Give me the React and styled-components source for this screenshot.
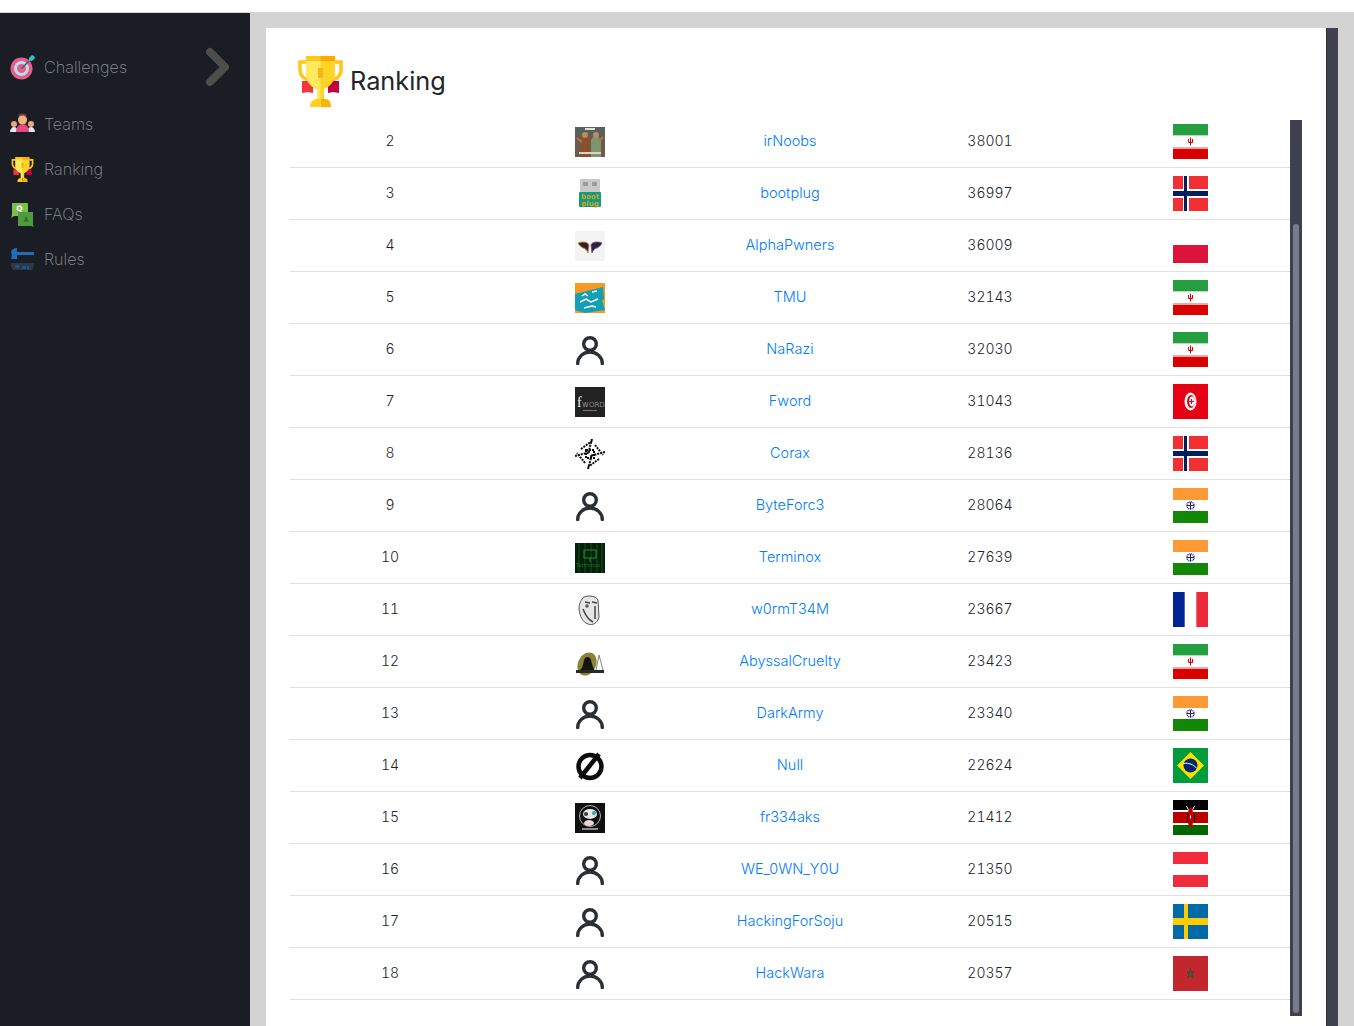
import React from "react";
import styled, { createGlobalStyle } from "styled-components";

const GlobalStyle = createGlobalStyle`
  html, body {
    margin: 0;
    height: 100%;
    overflow: hidden;
    background: #fff;
    font-family: Inter, "DejaVu Sans", sans-serif;
  }
`;

const Page = styled.div`
  padding-top: 12px;
  height: 1026px;
  box-sizing: border-box;
`;

const Shell = styled.div`
  display: flex;
  height: 1014px;
  background: #d3d3d3;
`;

const Sidebar = styled.nav`
  width: 250px;
  flex: none;
  box-sizing: border-box;
  margin-top: 1px;
  padding-top: 32px;
  background: #1a1d24;
`;

const NavItem = styled.a`
  display: flex;
  align-items: center;
  gap: 9px;
  height: 45px;
  padding: 0 20px 0 10px;
  margin-bottom: ${(p) => (p.$first ? "12px" : "0")};
  font-weight: 200;
  font-size: 16.200px;
  color: #8c8f94;
`;

const NavLabel = styled.span`
  padding-bottom: 2px;
`;

const NavIcon = styled.svg`
  width: 25px;
  height: 25px;
  flex: none;
`;

const Chevron = styled.svg`
  width: 24px;
  height: 40px;
  margin-left: auto;
  margin-top: -2px;
  transform: translateX(-1px);
`;

const Main = styled.main`
  flex: 1;
  display: flex;
  padding: 16px 16px 0;
  min-width: 0;
`;

const Card = styled.section`
  flex: 1;
  box-sizing: border-box;
  padding: 28px 24px 0;
  background: #fff;
  overflow: hidden;
`;

const OuterBar = styled.div`
  width: 12px;
  flex: none;
  background: #3f424e;
  border-left: 1px solid #2f313b;
  box-sizing: border-box;
`;

const Heading = styled.h1`
  display: flex;
  align-items: center;
  gap: 7px;
  height: 51px;
  margin: 0 0 9px;
  padding-left: 8px;
  font-weight: 400;
  font-size: 25.300px;
  color: #212529;
`;

const HeadingText = styled.span`
  padding-bottom: 2px;
`;

const TitleCup = styled.svg`
  width: 45px;
  height: 51px;
  flex: none;
`;

const TableArea = styled.div`
  display: flex;
`;

const Rows = styled.div`
  width: 1000px;
  flex: none;
`;

const Row = styled.div`
  display: grid;
  grid-template-columns: repeat(5, 200px);
  align-items: center;
  height: 52px;
  box-sizing: border-box;
  border-bottom: 1px solid #dee2e6;
  font-size: 14.500px;
  font-weight: 300;
  color: #212529;
  text-align: center;
`;

const Cell = styled.div`
  display: flex;
  justify-content: center;
  align-items: center;
`;

const NumberCell = styled(Cell)`
  padding-bottom: 2px;
  font-size: 14px;
  font-variant-numeric: tabular-nums;
`;

const NameCell = styled(Cell)`
  padding-bottom: 2px;
`;

const TeamLink = styled.a`
  color: #007bff;
  text-decoration: none;
`;

const Avatar = styled.svg`
  display: block;
  width: 30px;
  height: 30px;
`;

const Flag = styled.svg`
  display: block;
  width: 35px;
  height: 35px;
`;

const ScrollTrack = styled.div`
  width: 12px;
  flex: none;
  box-sizing: border-box;
  height: 896px;
  margin-top: 4px;
  padding: 104px 3px 3px;
  background: #3f424e;
`;

const ScrollThumb = styled.div`
  height: 100%;
  border-radius: 3px;
  background: #7a7d88;
`;

const Person = () => (
  <Avatar viewBox="0 0 30 30" fill="none" stroke="#2c2e35" strokeWidth="3.400" strokeLinecap="round">
    <circle cx="15" cy="9" r="6.300" />
    <path d="M2.700 28.500a12.300 11.500 0 0 1 24.600 0" />
  </Avatar>
);

const avatars = {
  irnoobs: (
    <Avatar viewBox="0 0 30 30">
      <rect width="30" height="30" fill="#6d5a4a" />
      <rect width="30" height="8" fill="#59615c" />
      <path d="M5 30V10l4-4h4l2 5v19z" fill="#8a4f2c" />
      <circle cx="10" cy="8" r="3" fill="#b98a68" />
      <path d="M16 30V13l3-4h4l3 5v16z" fill="#7f936c" />
      <circle cx="21" cy="8" r="3" fill="#b58c74" />
      <path d="M2 11l5 4M28 10l-4 4" stroke="#a57a5c" strokeWidth="2" />
      <rect x="4" y="25" width="22" height="2" fill="#d8d2cc" />
      <rect x="10" y="1" width="10" height="2" fill="#e2deda" />
    </Avatar>
  ),
  bootplug: (
    <Avatar viewBox="0 0 30 30">
      <rect x="5" y="0" width="20" height="14" fill="#c9c9c9" />
      <rect x="8" y="3" width="5" height="4" fill="#9a9a9a" />
      <rect x="17" y="3" width="5" height="4" fill="#9a9a9a" />
      <rect x="4" y="13" width="22" height="15" rx="1" fill="#109b82" />
      <text x="15" y="19.500" textAnchor="middle" fontSize="7" fontWeight="700" fontFamily="DejaVu Sans" fill="#d9a414">boot</text>
      <text x="15" y="26.500" textAnchor="middle" fontSize="7" fontWeight="700" fontFamily="DejaVu Sans" fill="#d9a414">plug</text>
    </Avatar>
  ),
  alpha: (
    <Avatar viewBox="0 0 30 30">
      <rect width="30" height="30" fill="#f3f3f3" />
      <path d="M3 12c5-2 10-1 11 2l-1 8c-1-3-3-5-5-5-2-1-4-3-5-5z" fill="#2b2430" stroke="#e08a1e" strokeWidth=".8" />
      <path d="M27 12c-5-2-10-1-11 2l1 8c1-3 3-5 5-5 2-1 4-3 5-5z" fill="#2b2430" stroke="#6a3fb0" strokeWidth=".8" />
    </Avatar>
  ),
  tmu: (
    <Avatar viewBox="0 0 30 30">
      <rect width="30" height="30" fill="#f59a23" />
      <path d="M0 11l28-7 1 12-2 2 3 9-20 3-10-3z" fill="#14a0b4" />
      <path d="M7 13l3-2 3 2M17 9l5-1M5 19l6-3 5 3 7-3M9 25l8-2 4 1" stroke="#fff" strokeWidth="1.500" fill="none" />
    </Avatar>
  ),
  fword: (
    <Avatar viewBox="0 0 30 30">
      <rect width="30" height="30" fill="#222" />
      <text x="2" y="20" fontSize="14" fontFamily="Liberation Serif" fill="#eee">f</text>
      <text x="7" y="20" fontSize="7" fontFamily="DejaVu Sans" fill="#ddd">WORD</text>
      <rect x="8" y="23" width="14" height="1" fill="#777" />
    </Avatar>
  ),
  corax: (
    <Avatar viewBox="0 0 30 30" fill="none" stroke="#0a0a0a" strokeWidth="2" strokeDasharray="2 1">
      <rect x="11" y="11" width="8" height="8" />
      <path d="M0 17L15 13M30 13L15 17M17 0L13 15M13 30L17 15" />
      <path d="M6 10L17 2M24 20L13 28M20 6L28 16M10 24L2 14" />
    </Avatar>
  ),
  terminox: (
    <Avatar viewBox="0 0 30 30">
      <rect width="30" height="30" fill="#052009" />
      <path d="M4 0v30M10 0v30M16 0v30M22 0v30M27 0v30" stroke="#0c4019" strokeWidth="1.500" />
      <rect x="9" y="7" width="12" height="8" fill="none" stroke="#2a8a38" />
      <path d="M15 15v4" stroke="#2a8a38" />
      <text x="1" y="24" fontSize="5.400" fontFamily="DejaVu Sans" fill="#28b13a">Terminox</text>
    </Avatar>
  ),
  worm: (
    <Avatar viewBox="0 0 30 30">
      <path d="M9 2c5-2 12-1 14 3l1 17c-1 6-7 9-11 7-6-2-8-8-9-15 0-5 2-10 5-12z" fill="#e6e6e6" stroke="#555" />
      <path d="M10 7l5 1M17 7l5 1M8 14c3 8 6 11 10 13M20 11v13" stroke="#444" strokeWidth="1.500" fill="none" />
      <circle cx="12" cy="11" r="1.700" fill="#555" />
    </Avatar>
  ),
  abyssal: (
    <Avatar viewBox="0 0 30 30">
      <ellipse cx="12" cy="17" rx="9" ry="12" fill="#8a8238" transform="rotate(25 12 17)" />
      <path d="M4 24c3-2 4-5 5-11 1-4 6-4 7 0 1 4 2 8 4 11z" fill="#15140f" />
      <path d="M24 8l-3 15M24 8l4 15" stroke="#666" strokeWidth=".8" fill="none" />
      <rect x="1" y="23" width="28" height="3" fill="#2a2a22" />
    </Avatar>
  ),
  nul: (
    <Avatar viewBox="0 0 30 30" fill="none" stroke="#0c0c0c" strokeWidth="4.500">
      <circle cx="15" cy="15.500" r="11.500" />
      <path d="M24 3L5 27" />
    </Avatar>
  ),
  freaks: (
    <Avatar viewBox="0 0 30 30">
      <rect width="30" height="30" fill="#101010" />
      <circle cx="15" cy="13" r="10.500" fill="none" stroke="#b9b0a8" />
      <ellipse cx="15" cy="11" rx="7" ry="5" fill="#e8e8e8" />
      <circle cx="11" cy="11" r="2" fill="#3a3a3a" />
      <circle cx="19" cy="10" r="2" fill="#20b0a0" />
      <ellipse cx="14" cy="20" rx="5" ry="3" fill="#e2dad6" />
      <rect x="7" y="25" width="16" height="2" fill="#8a8a8a" />
    </Avatar>
  ),
};

const Iran = () => (
  <Flag viewBox="0 0 35 35">
    <rect width="35" height="12" fill="#239f40" />
    <rect y="11" width="35" height="1" fill="#b4dcbc" />
    <rect y="23" width="35" height="12" fill="#da0000" />
    <rect y="23" width="35" height="2" fill="#eda8a8" />
    <path d="M17.500 13.500v8M15.500 15v3.500h4V15" stroke="#da0000" strokeWidth="1" fill="none" />
  </Flag>
);

const Norway = () => (
  <Flag viewBox="0 0 35 35">
    <rect width="35" height="35" fill="#f22f33" />
    <path d="M10 0h6v35h-6zM0 13h35v9H0z" fill="#fff" />
    <path d="M11 0h3v35h-3zM0 15h35v5H0z" fill="#00205b" />
  </Flag>
);

const Poland = () => (
  <Flag viewBox="0 0 35 35">
    <rect y="17" width="35" height="18" fill="#dc143c" />
  </Flag>
);

const Tunisia = () => (
  <Flag viewBox="0 0 35 35">
    <rect width="35" height="35" fill="#e70013" />
    <ellipse cx="17.500" cy="17.500" rx="6" ry="9" fill="#fff" />
    <ellipse cx="18" cy="17.500" rx="4" ry="6.500" fill="#e70013" />
    <ellipse cx="19" cy="17.500" rx="3" ry="5" fill="#fff" />
    <path d="M16 17.500h5M18.500 15v5" stroke="#e70013" strokeWidth="1.200" />
  </Flag>
);

const India = () => (
  <Flag viewBox="0 0 35 35">
    <rect width="35" height="12" fill="#ff9933" />
    <rect y="23" width="35" height="12" fill="#138808" />
    <circle cx="17.500" cy="17.500" r="3.600" fill="#fff" stroke="#1a1a8c" strokeWidth="1.400" strokeDasharray="1 .7" />
    <path d="M14 17.500h7M17.500 14v7" stroke="#1a1a8c" strokeWidth="1" />
  </Flag>
);

const France = () => (
  <Flag viewBox="0 0 35 35">
    <rect width="11.670" height="35" fill="#002395" />
    <rect x="23.330" width="11.670" height="35" fill="#ed2939" />
  </Flag>
);

const Brazil = () => (
  <Flag viewBox="0 0 35 35">
    <rect width="35" height="35" fill="#009b3a" />
    <path d="M17.500 4L31 17.500 17.500 31 4 17.500z" fill="#fedf00" />
    <circle cx="17.500" cy="17.500" r="7" fill="#002776" />
    <path d="M10.500 15.500c5-1 10 1 13.500 5" stroke="#fff" strokeWidth="1" fill="none" />
  </Flag>
);

const Kenya = () => (
  <Flag viewBox="0 0 35 35">
    <rect width="35" height="10" fill="#000" />
    <rect y="10" width="35" height="15" fill="#fff" />
    <rect y="12" width="35" height="11" fill="#bb0000" />
    <rect y="25" width="35" height="10" fill="#006600" />
    <path d="M13.500 6l2 4M21.500 6l-2 4" stroke="#fff" />
    <rect x="14" y="13" width="1" height="9" fill="#000" />
    <rect x="21" y="13" width="1" height="9" fill="#000" />
    <ellipse cx="17.500" cy="17.500" rx="2.800" ry="10.500" fill="#bb0000" />
    <rect x="17" y="15.500" width="1" height="3" fill="#fff" />
  </Flag>
);

const Austria = () => (
  <Flag viewBox="0 0 35 35">
    <rect width="35" height="12" fill="#ef2b3d" />
    <rect y="23" width="35" height="12" fill="#ef2b3d" />
  </Flag>
);

const Sweden = () => (
  <Flag viewBox="0 0 35 35">
    <rect width="35" height="35" fill="#006aa7" />
    <path d="M11 0h4v35h-4zM0 14h35v7H0z" fill="#fecc00" />
  </Flag>
);

const Morocco = () => (
  <Flag viewBox="0 0 35 35">
    <rect width="35" height="35" fill="#c1272d" />
    <path d="M17.500 12l2.500 10-6-6h7l-6 6z" fill="none" stroke="#1d5a33" strokeWidth=".9" />
  </Flag>
);

const teams = [
  { rank: 2, avatar: "irnoobs", name: "irNoobs", score: 38001, Country: Iran },
  { rank: 3, avatar: "bootplug", name: "bootplug", score: 36997, Country: Norway },
  { rank: 4, avatar: "alpha", name: "AlphaPwners", score: 36009, Country: Poland },
  { rank: 5, avatar: "tmu", name: "TMU", score: 32143, Country: Iran },
  { rank: 6, name: "NaRazi", score: 32030, Country: Iran },
  { rank: 7, avatar: "fword", name: "Fword", score: 31043, Country: Tunisia },
  { rank: 8, avatar: "corax", name: "Corax", score: 28136, Country: Norway },
  { rank: 9, name: "ByteForc3", score: 28064, Country: India },
  { rank: 10, avatar: "terminox", name: "Terminox", score: 27639, Country: India },
  { rank: 11, avatar: "worm", name: "w0rmT34M", score: 23667, Country: France },
  { rank: 12, avatar: "abyssal", name: "AbyssalCruelty", score: 23423, Country: Iran },
  { rank: 13, name: "DarkArmy", score: 23340, Country: India },
  { rank: 14, avatar: "nul", name: "Null", score: 22624, Country: Brazil },
  { rank: 15, avatar: "freaks", name: "fr334aks", score: 21412, Country: Kenya },
  { rank: 16, name: "WE_0WN_Y0U", score: 21350, Country: Austria },
  { rank: 17, name: "HackingForSoju", score: 20515, Country: Sweden },
  { rank: 18, name: "HackWara", score: 20357, Country: Morocco },
];

const cupShapes = (
  <>
    <path d="M9 6H2v8c0 6 5 10 12 11M36 6h7v8c0 6-5 10-12 11" fill="none" stroke="#ffc61b" strokeWidth="3.500" />
    <path d="M4 25h11v12l-5-1-6 1z" fill="#f8333c" />
    <path d="M41 25H30v12l5-1 6 1z" fill="#c2003f" />
    <rect x="8" y="0" width="29" height="6" fill="#ffa800" />
    <rect x="8" y="0" width="14.500" height="6" fill="#ffc61b" />
    <path d="M8 5h29v13c0 8-6 13-11 15v10h-7V33C13 31 8 26 8 18z" fill="#ffd426" />
    <path d="M8 5h14.500v38H19V33C13 31 8 26 8 18z" fill="#ffe95c" />
    <rect x="20" y="12" width="5" height="10" fill="#f5b51e" />
    <path d="M22.500 43H27c4 0 6 3 6 8H22.500z" fill="#ffb300" />
    <path d="M12 51c0-5 3-8 7-8h3.500v8z" fill="#ffcf1f" />
  </>
);

const Target = () => (
  <NavIcon viewBox="0 0 25 25">
    <circle cx="11.500" cy="13.500" r="11" fill="#e85d88" />
    <circle cx="11.500" cy="13.500" r="7.500" fill="#b9dcf2" />
    <circle cx="11.500" cy="13.500" r="4.500" fill="#e85d88" />
    <path d="M11.500 13.500L20 5" stroke="#50585f" strokeWidth="1.500" />
    <path d="M19 3l3-3 2 1 1 2-3 3h-3z" fill="#34bfc0" />
  </NavIcon>
);

const TeamsIcon = () => (
  <NavIcon viewBox="0 0 25 25">
    <circle cx="4" cy="12" r="3" fill="#e8a877" />
    <circle cx="21" cy="12" r="3" fill="#e8a877" />
    <path d="M0 20c0-3 2-5 4-5s4 2 4 5zM17 20c0-3 2-5 4-5s4 2 4 5z" fill="#e7e4ea" />
    <path d="M8.500 3c1-2 7-2 8 0v4h-8z" fill="#6b4335" />
    <circle cx="12.500" cy="8" r="4.500" fill="#f1b27e" />
    <path d="M6 20c0-5 3-8 6.500-8s6.500 3 6.500 8z" fill="#e94a7e" />
  </NavIcon>
);

const SmallCup = () => <NavIcon viewBox="0 0 45 51">{cupShapes}</NavIcon>;

const FaqIcon = () => (
  <NavIcon viewBox="0 0 25 25">
    <path d="M2 1h15a1 1 0 0 1 1 1v12H4l-3 2 1-3z" fill="#7cc04b" />
    <path d="M8 10h15v13l1 2-3-1H8z" fill="#4f9a3c" />
    <text x="9.500" y="9" textAnchor="middle" fontSize="7.500" fontWeight="700" fontFamily="DejaVu Sans" fill="#fff">Q</text>
    <text x="16" y="20" textAnchor="middle" fontSize="6.500" fontWeight="700" fontFamily="DejaVu Sans" fill="#2a6a2a">A</text>
  </NavIcon>
);

const RulesIcon = () => (
  <NavIcon viewBox="0 0 25 25">
    <path d="M1 5c1-3 3-4 6-4v4h17v3H7v4H1l1-4z" fill="#1b6fbb" />
    <path d="M1 16h23v3l-2 4H3l-2-4z" fill="#2a3a4c" />
    <path d="M6 18v3M8 18v3M13 19v3M15 19v3M18 19v3" stroke="#1b6fbb" strokeWidth="1" />
  </NavIcon>
);

const nav = [
  { label: "Teams", Icon: TeamsIcon },
  { label: "Ranking", Icon: SmallCup },
  { label: "FAQs", Icon: FaqIcon },
  { label: "Rules", Icon: RulesIcon },
];

const App = () => (
  <Page>
    <GlobalStyle />
    <Shell>
      <Sidebar>
        <NavItem $first>
          <Target />
          <NavLabel>Challenges</NavLabel>
          <Chevron viewBox="0 0 24 40" fill="none" stroke="#4d4d4d" strokeWidth="8" strokeLinecap="round" strokeLinejoin="round">
            <path d="M5 5l15 15L5 35" />
          </Chevron>
        </NavItem>
        {nav.map(({ label, Icon }) => (
          <NavItem key={label}>
            <Icon />
            <NavLabel>{label}</NavLabel>
          </NavItem>
        ))}
      </Sidebar>
      <Main>
        <Card>
          <Heading>
            <TitleCup viewBox="0 0 45 51">{cupShapes}</TitleCup>
            <HeadingText>Ranking</HeadingText>
          </Heading>
          <TableArea>
            <Rows>
              {teams.map(({ rank, avatar, name, score, Country }) => (
                <Row key={rank}>
                  <NumberCell>{rank}</NumberCell>
                  <Cell>{avatar ? avatars[avatar] : <Person />}</Cell>
                  <NameCell>
                    <TeamLink href="#">{name}</TeamLink>
                  </NameCell>
                  <NumberCell>{score}</NumberCell>
                  <Cell>
                    <Country />
                  </Cell>
                </Row>
              ))}
            </Rows>
            <ScrollTrack>
              <ScrollThumb />
            </ScrollTrack>
          </TableArea>
        </Card>
        <OuterBar />
      </Main>
    </Shell>
  </Page>
);

export default App;
